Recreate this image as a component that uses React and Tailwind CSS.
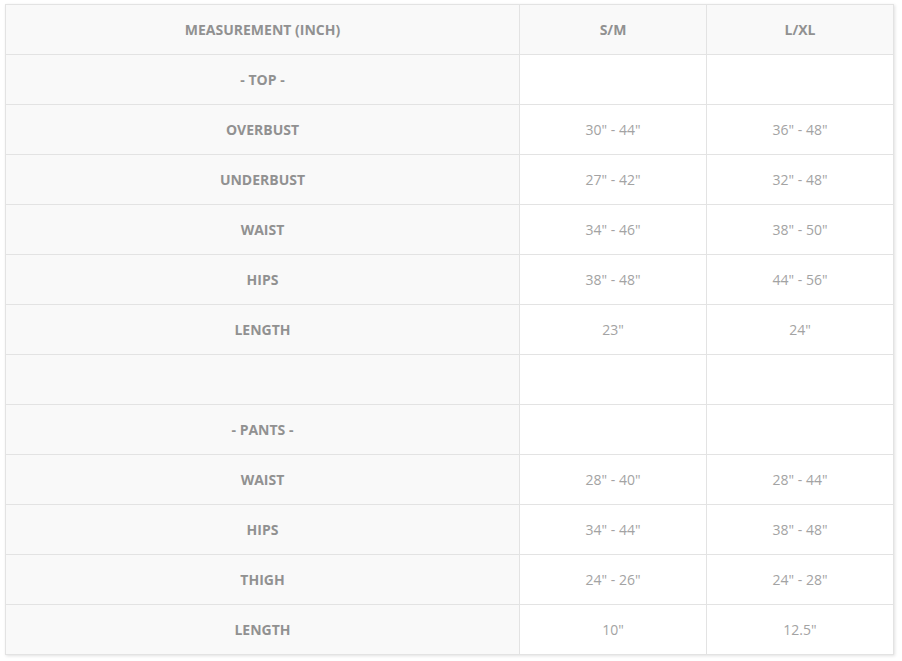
const rows = [
  ['- TOP -', '', ''],
  ['OVERBUST', '30" - 44"', '36" - 48"'],
  ['UNDERBUST', '27" - 42"', '32" - 48"'],
  ['WAIST', '34" - 46"', '38" - 50"'],
  ['HIPS', '38" - 48"', '44" - 56"'],
  ['LENGTH', '23"', '24"'],
  ['', '', ''],
  ['- PANTS -', '', ''],
  ['WAIST', '28" - 40"', '28" - 44"'],
  ['HIPS', '34" - 44"', '38" - 48"'],
  ['THIGH', '24" - 26"', '24" - 28"'],
  ['LENGTH', '10"', '12.5"'],
];

export default function App() {
  return (
    <div className="min-h-screen bg-white pt-[4px] pl-[5px]" style={{ fontFamily: '"Open Sans", sans-serif' }}>
      <table className="w-[888px] border-collapse table-fixed text-[14px] shadow-[1px_1px_3px_rgba(0,0,0,0.12)]">
        <colgroup>
          <col className="w-[514px]" />
          <col className="w-[187px]" />
          <col className="w-[187px]" />
        </colgroup>
        <thead>
          <tr className="bg-[#f9f9f9]">
            <th className="h-[50px] border border-[#e3e3e3] font-bold text-[#919191] text-center">MEASUREMENT (INCH)</th>
            <th className="h-[50px] border border-[#e3e3e3] font-bold text-[#919191] text-center">S/M</th>
            <th className="h-[50px] border border-[#e3e3e3] font-bold text-[#919191] text-center">L/XL</th>
          </tr>
        </thead>
        <tbody>
          {rows.map((r, i) => (
            <tr key={i}>
              <td className="h-[50px] border border-[#e3e3e3] bg-[#f9f9f9] font-bold text-[#919191] text-center">{r[0]}</td>
              <td className="h-[50px] border border-[#e3e3e3] bg-white text-[#a3a3a3] text-center">{r[1]}</td>
              <td className="h-[50px] border border-[#e3e3e3] bg-white text-[#a3a3a3] text-center">{r[2]}</td>
            </tr>
          ))}
        </tbody>
      </table>
    </div>
  );
}
